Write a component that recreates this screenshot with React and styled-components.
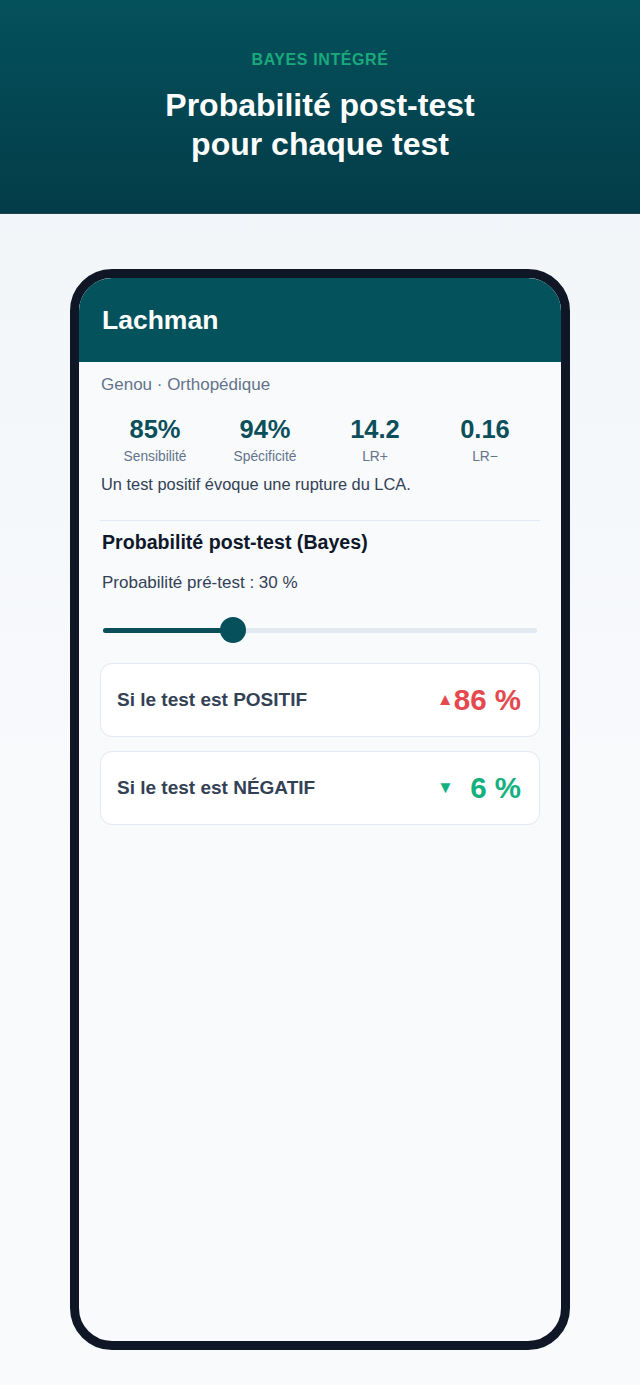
import React from "react";
import styled, { createGlobalStyle } from "styled-components";

const GlobalStyle = createGlobalStyle`
  body {
    margin: 0;
    font-family: "Liberation Sans", Arial, sans-serif;
    background: #f1f5f9;
  }
`;

const Page = styled.div`
  width: 640px;
  min-height: 1385px;
  background: linear-gradient(180deg, #f1f4f8 0%, #f8fafc 60%);
  display: flex;
  flex-direction: column;
  align-items: center;
`;

const Hero = styled.header`
  width: 100%;
  height: 214px;
  box-sizing: border-box;
  padding-top: 51px;
  background: linear-gradient(180deg, #04515c 0%, #033c48 100%);
  text-align: center;
  border-bottom: 1px solid #22434d;
`;

const Eyebrow = styled.div`
  font-size: 16px;
  line-height: 18px;
  font-weight: 700;
  letter-spacing: 0.6px;
  color: #1aa97c;
`;

const HeroTitle = styled.h1`
  margin: 17px 0 0;
  font-size: 32px;
  line-height: 39px;
  font-weight: 700;
  color: #ffffff;
`;

const Phone = styled.div`
  margin-top: 55px;
  width: 500px;
  height: 1081px;
  box-sizing: border-box;
  border: 9px solid #0f1727;
  border-radius: 42px;
  background: #f8fafc;
  overflow: hidden;
  display: flex;
  flex-direction: column;
`;

const ScreenHeader = styled.div`
  height: 84px;
  flex-shrink: 0;
  background: #04525c;
  display: flex;
  align-items: center;
  padding: 0 23px;
  font-size: 26.5px;
  font-weight: 700;
  color: #ffffff;
`;

const ScreenBody = styled.div`
  padding: 13px 21px 0;
  display: flex;
  flex-direction: column;
`;

const Subtitle = styled.div`
  font-size: 17px;
  line-height: 20px;
  color: #64748b;
  padding-left: 1px;
`;

const StatGrid = styled.div`
  margin-top: 20px;
  display: grid;
  grid-template-columns: repeat(4, 1fr);
`;

const Stat = styled.div`
  display: flex;
  flex-direction: column;
  align-items: center;
  gap: 6px;
`;

const StatValue = styled.div`
  font-size: 25.5px;
  line-height: 28px;
  font-weight: 700;
  color: #0b4f5b;
`;

const StatLabel = styled.div`
  font-size: 13.8px;
  line-height: 16px;
  color: #64748b;
`;

const Description = styled.p`
  margin: 9px 0 0;
  padding-left: 1px;
  font-size: 16.4px;
  line-height: 20px;
  color: #334155;
`;

const Divider = styled.hr`
  margin: 26px 0 0;
  border: none;
  height: 1px;
  background: #e2e8f0;
`;

const SectionTitle = styled.h2`
  margin: 9px 0 0;
  padding-left: 2px;
  font-size: 19.6px;
  line-height: 24px;
  font-weight: 700;
  color: #0f172a;
`;

const PreTest = styled.div`
  margin-top: 19px;
  padding-left: 2px;
  font-size: 17px;
  line-height: 20px;
  color: #334155;
`;

const Slider = styled.div`
  margin: 24px 3px 0;
  height: 26px;
  position: relative;
  display: flex;
  align-items: center;
`;

const Track = styled.div`
  width: 100%;
  height: 5px;
  border-radius: 3px;
  background: #e2e8f0;
  position: relative;
`;

const Fill = styled.div`
  height: 100%;
  border-radius: 3px;
  background: #0b4f5b;
`;

const Thumb = styled.div`
  position: absolute;
  top: 50%;
  width: 26px;
  height: 26px;
  border-radius: 50%;
  background: #06505b;
  transform: translate(-50%, -50%);
`;

const Results = styled.div`
  margin-top: 20px;
  display: flex;
  flex-direction: column;
  gap: 14px;
`;

const ResultCard = styled.div`
  height: 74px;
  box-sizing: border-box;
  border: 1px solid #e2e8f0;
  border-radius: 12px;
  background: #ffffff;
  padding: 0 18px 0 16px;
  display: flex;
  align-items: center;
  justify-content: space-between;
`;

const ResultLabel = styled.div`
  font-size: 19px;
  font-weight: 700;
  color: #334155;
`;

const ResultValue = styled.div`
  display: flex;
  align-items: center;
  gap: 3px;
  color: ${(p) => (p.$up ? "#e5484d" : "#14b07f")};
`;

const Arrow = styled.span`
  font-size: 17px;
  width: 14px;
  text-align: center;
`;

const Percent = styled.span`
  min-width: 67px;
  text-align: right;
  font-size: 29.5px;
  font-weight: 700;
`;

const stats = [
  { value: "85%", label: "Sensibilité" },
  { value: "94%", label: "Spécificité" },
  { value: "14.2", label: "LR+" },
  { value: "0.16", label: "LR−" },
];

const pretest = 30;

export default function App() {
  return (
    <>
      <GlobalStyle />
      <Page>
        <Hero>
          <Eyebrow>BAYES INTÉGRÉ</Eyebrow>
          <HeroTitle>
            Probabilité post-test
            <br />
            pour chaque test
          </HeroTitle>
        </Hero>
        <Phone>
          <ScreenHeader>Lachman</ScreenHeader>
          <ScreenBody>
            <Subtitle>Genou · Orthopédique</Subtitle>
            <StatGrid>
              {stats.map((s) => (
                <Stat key={s.label}>
                  <StatValue>{s.value}</StatValue>
                  <StatLabel>{s.label}</StatLabel>
                </Stat>
              ))}
            </StatGrid>
            <Description>Un test positif évoque une rupture du LCA.</Description>
            <Divider />
            <SectionTitle>Probabilité post-test (Bayes)</SectionTitle>
            <PreTest>Probabilité pré-test : {pretest} %</PreTest>
            <Slider>
              <Track>
                <Fill style={{ width: `${pretest}%` }} />
              </Track>
              <Thumb style={{ left: `${pretest}%` }} />
            </Slider>
            <Results>
              <ResultCard>
                <ResultLabel>Si le test est POSITIF</ResultLabel>
                <ResultValue $up>
                  <Arrow>▲</Arrow>
                  <Percent>86 %</Percent>
                </ResultValue>
              </ResultCard>
              <ResultCard>
                <ResultLabel>Si le test est NÉGATIF</ResultLabel>
                <ResultValue>
                  <Arrow>▼</Arrow>
                  <Percent>6 %</Percent>
                </ResultValue>
              </ResultCard>
            </Results>
          </ScreenBody>
        </Phone>
      </Page>
    </>
  );
}
